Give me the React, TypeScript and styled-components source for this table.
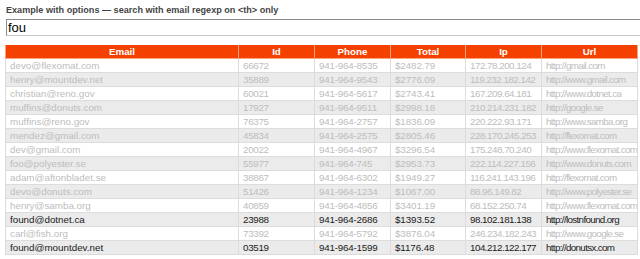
import React from "react";
import styled, { createGlobalStyle } from "styled-components";

const GlobalStyle = createGlobalStyle`
  html, body {
    margin: 0;
    padding: 0;
    background: #fff;
    overflow: hidden;
  }
  body {
    font-family: "Liberation Sans", Arial, sans-serif;
  }
`;

const Page = styled.div`
  padding: 3px 0 0 5px;
  width: 640px;
  box-sizing: border-box;
`;

const Title = styled.div`
  font-size: 9.1px;
  font-weight: bold;
  color: #444;
  line-height: 12px;
  padding: 1px 0 0 1px;
`;

const Search = styled.input`
  display: block;
  margin: 3px 0 0 1px;
  width: 660px;
  height: 17px;
  box-sizing: border-box;
  border: 1px solid #c8c8c8;
  border-top-color: #8a8a8a;
  border-left-color: #8a8a8a;
  padding: 0 1px;
  font-family: "Liberation Sans", Arial, sans-serif;
  font-size: 13px;
  color: #000;
  outline: none;
`;

const Table = styled.table`
  margin-top: 9px;
  width: 632px;
  border-collapse: collapse;
  table-layout: fixed;
  font-size: 9.8px;
  line-height: 13px;
`;

const Head = styled.th`
  background: #f44100;
  color: #fff;
  font-size: 9.8px;
  font-weight: bold;
  text-align: center;
  height: 13px;
  padding: 0;
  border: 1px solid #f8a27f;
  border-top: none;
`;

const Row = styled.tr<{ $odd: boolean }>`
  background: ${(p) => (p.$odd ? "#ebebeb" : "#fff")};
`;

const Cell = styled.td<{ $found: boolean; $tight: number }>`
  height: 13px;
  padding: 0 2px 0 4px;
  border: 1px solid #dcdcdc;
  color: ${(p) => (p.$found ? "#1a1a1a" : "#bdbdbd")};
  letter-spacing: ${(p) => p.$tight}px;
  white-space: nowrap;
  overflow: hidden;
`;

const columns = [
  { label: "Email", width: 233, tight: 0 },
  { label: "Id", width: 76, tight: -0.3 },
  { label: "Phone", width: 76, tight: -0.2 },
  { label: "Total", width: 75, tight: -0.1 },
  { label: "Ip", width: 76, tight: -0.5 },
  { label: "Url", width: 96, tight: -0.65 },
];

const rows = [
  ["devo@flexomat.com", "66672", "941-964-8535", "$2482.79", "172.78.200.124", "http://gmail.com"],
  ["henry@mountdev.net", "35889", "941-964-9543", "$2776.09", "119.232.182.142", "http://www.gmail.com"],
  ["christian@reno.gov", "60021", "941-964-5617", "$2743.41", "167.209.64.181", "http://www.dotnet.ca"],
  ["muffins@donuts.com", "17927", "941-964-9511", "$2998.18", "210.214.231.182", "http://google.se"],
  ["muffins@reno.gov", "76375", "941-964-2757", "$1836.09", "220.222.93.171", "http://www.samba.org"],
  ["mendez@gmail.com", "45834", "941-964-2575", "$2805.46", "228.170.245.253", "http://flexomat.com"],
  ["dev@gmail.com", "20022", "941-964-4967", "$3296.54", "175.248.70.240", "http://www.flexomat.com"],
  ["foo@polyester.se", "55977", "941-964-745", "$2953.73", "222.114.227.156", "http://www.donuts.com"],
  ["adam@aftonbladet.se", "38867", "941-964-6302", "$1949.27", "116.241.143.196", "http://flexomat.com"],
  ["devo@donuts.com", "51426", "941-964-1234", "$1067.00", "88.96.149.82", "http://www.polyester.se"],
  ["henry@samba.org", "40859", "941-964-4856", "$3401.19", "68.152.250.74", "http://www.flexomat.com"],
  ["found@dotnet.ca", "23988", "941-964-2686", "$1393.52", "98.102.181.138", "http://lostnfound.org"],
  ["carl@fish.org", "73392", "941-964-5792", "$3876.04", "246.234.182.243", "http://www.google.se"],
  ["found@mountdev.net", "03519", "941-964-1599", "$1176.48", "104.212.122.177", "http://donutsx.com"],
];

export default function App() {
  return (
    <Page>
      <GlobalStyle />
      <Title>Example with options — search with email regexp on &lt;th&gt; only</Title>
      <Search defaultValue="fou" />
      <Table>
        <colgroup>
          {columns.map((c) => (
            <col key={c.label} style={{ width: c.width }} />
          ))}
        </colgroup>
        <thead>
          <tr>
            {columns.map((c) => (
              <Head key={c.label}>{c.label}</Head>
            ))}
          </tr>
        </thead>
        <tbody>
          {rows.map((r, i) => {
            const found = r[0].startsWith("found");
            return (
              <Row key={r[0]} $odd={i % 2 === 1}>
                {r.map((v, j) => (
                  <Cell key={j} $found={found} $tight={columns[j].tight}>
                    {v}
                  </Cell>
                ))}
              </Row>
            );
          })}
        </tbody>
      </Table>
    </Page>
  );
}
